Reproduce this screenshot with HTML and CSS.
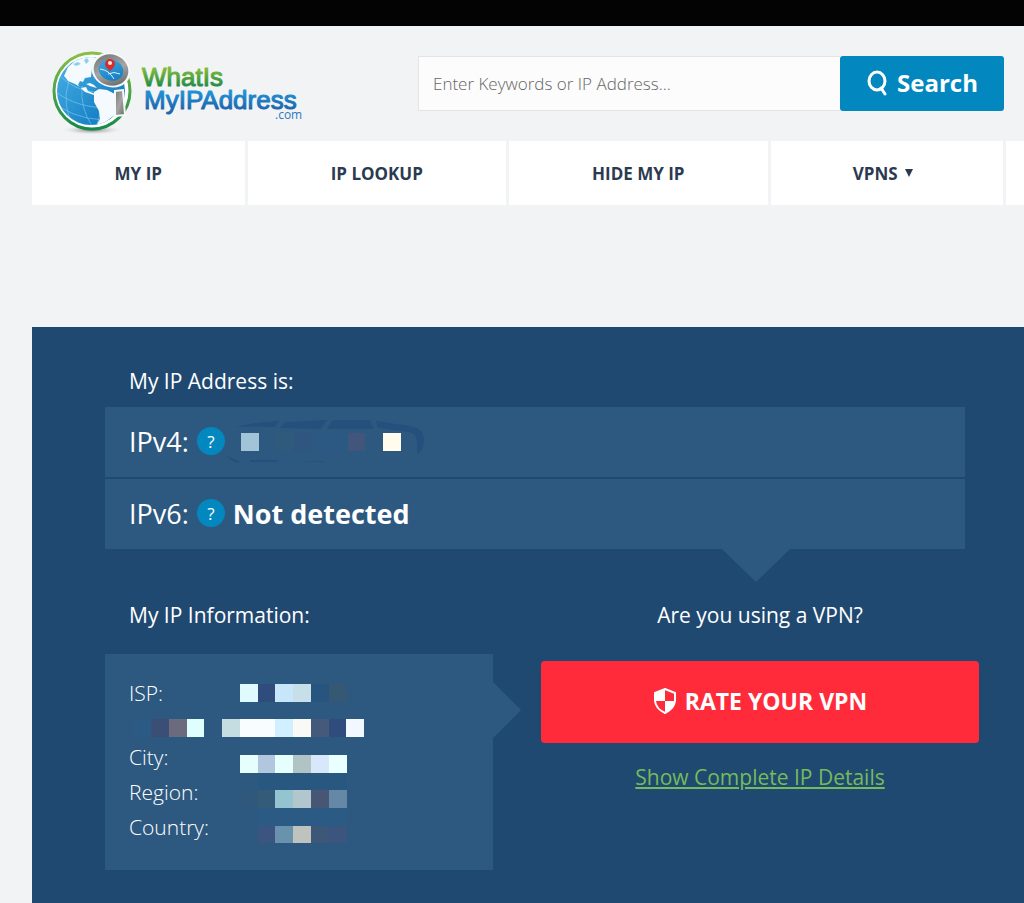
FILE: index.html
```html
<!DOCTYPE html>
<html lang="en">
<head>
    <meta charset="UTF-8">
    <meta name="viewport" content="width=device-width, initial-scale=1.0">
    <title>What Is My IP Address</title>
    <link rel="stylesheet" href="styles.css">
</head>
<body>
    <div class="top-bar"></div>

    <header class="header">
        <a class="logo" href="#" aria-label="WhatIsMyIPAddress.com">
            <svg width="256" height="88" viewBox="48 48 256 88">
                <defs>
                    <linearGradient id="ring" x1="0" y1="0" x2="0" y2="1">
                        <stop offset="0" stop-color="#8abf45"/>
                        <stop offset="1" stop-color="#158a48"/>
                    </linearGradient>
                    <linearGradient id="ocean" x1="0" y1="0" x2="1" y2="1">
                        <stop offset="0" stop-color="#49b2e6"/>
                        <stop offset="1" stop-color="#0871bc"/>
                    </linearGradient>
                    <linearGradient id="green" x1="0" y1="0" x2="0" y2="1">
                        <stop offset="0.2" stop-color="#83bd3c"/>
                        <stop offset="0.8" stop-color="#238c46"/>
                    </linearGradient>
                    <linearGradient id="blue" x1="0" y1="0" x2="0" y2="1">
                        <stop offset="0.1" stop-color="#209bdc"/>
                        <stop offset="0.8" stop-color="#1b66ae"/>
                    </linearGradient>
                    <linearGradient id="steel" x1="0" y1="0" x2="1" y2="1">
                        <stop offset="0" stop-color="#777"/>
                        <stop offset="0.5" stop-color="#a5a5a5"/>
                        <stop offset="1" stop-color="#666"/>
                    </linearGradient>
                    <radialGradient id="shadow">
                        <stop offset="0" stop-color="#777"/>
                        <stop offset="1" stop-color="#f1f3f5" stop-opacity="0"/>
                    </radialGradient>
                    <clipPath id="globe"><circle cx="91" cy="91" r="34"/></clipPath>
                </defs>
                <ellipse cx="92" cy="130" rx="32" ry="5" fill="url(#shadow)"/>
                <circle cx="92" cy="91" r="38" fill="#fff" stroke="url(#ring)" stroke-width="3"/>
                <circle cx="91" cy="91" r="34" fill="url(#ocean)"/>
                <g clip-path="url(#globe)">
                    <path d="M56 92q26 20 70 15M60 76q14 14 34 16M60 107q25 16 58 12M74 72q-14 20-4 48M82 86q-2 22 10 40M97 104q5 10 0 20" fill="none" stroke="#8bd0f2" stroke-width="0.7" opacity="0.8"/>
                    <path d="M64 76l4-9 7-6 9-4 9-2 3 4-4 8-1 10-6 1-2 4-3-1-2 4 3 3 5-1 2 4 7 3-1 1-9-3-5-5-5-3-7-3-3-4z" fill="#f4fafd"/>
                    <path d="M73 64l5-2 3 2-5 2zM84 60l3-2 2 3-3 3z" fill="#8fcdec"/>
                    <path d="M94 92l5-3 8 1 8 4 10 4-2 10-8 7-7 5-6 5-6 1 4-7-1-8-5-9z" fill="#f4fafd"/>
                    <path d="M86 84l4-1 4 2 3 3-4-1-3-1z" fill="#f4fafd"/>
                </g>
                <path d="M115 91l8-1 2 25-10 1z" fill="url(#steel)" stroke="#f7f8f9" stroke-width="2"/>
                <ellipse cx="111" cy="70" rx="20" ry="17" transform="rotate(20 111 70)" fill="#f7f8f9"/>
                <ellipse cx="111" cy="70" rx="15" ry="13" transform="rotate(20 111 70)" fill="url(#ocean)" stroke="url(#steel)" stroke-width="5"/>
                <path d="M100 69q9 1 14 10M108 74q6-3 12 0" fill="none" stroke="#d9f0fb" stroke-width="1"/>
                <path d="M110 71q-5-4-5-7a5 5 0 0 1 10 0q0 3-5 7z" fill="#d42e30"/>
                <circle cx="110" cy="63" r="2" fill="#ffe9dd"/>
                <text class="logo-name" x="142" y="86" fill="url(#green)" stroke="url(#green)">WhatIs</text>
                <text class="logo-name" x="144" y="109" fill="url(#blue)" stroke="url(#blue)">MyIPAddress</text>
                <text class="logo-domain" x="275" y="119">.com</text>
            </svg>
        </a>
        <form class="search">
            <input class="search-input" type="text" placeholder="Enter Keywords or IP Address..." aria-label="Enter Keywords or IP Address">
            <button class="search-btn" type="submit">
                <svg width="24" height="26" viewBox="0 0 24 26" fill="none" stroke="#fff" stroke-width="3">
                    <ellipse cx="11" cy="11" rx="8" ry="9"/>
                    <path d="M15 18l4 6" stroke-linecap="round"/>
                </svg>
                Search
            </button>
        </form>
    </header>

    <nav class="nav">
        <a href="#">MY IP</a>
        <a href="#">IP LOOKUP</a>
        <a href="#">HIDE MY IP</a>
        <a class="has-menu" href="#">VPNS <span class="caret"></span></a>
        <span class="nav-rest"></span>
    </nav>

    <main class="panel">
        <h2 class="title">My IP Address is:</h2>
        <div class="ip-box">
            <div class="ip-row">
                <span>IPv4:</span>
                <button class="help" type="button" aria-label="About IPv4">?</button>
                <svg class="ip-hidden" width="200" height="48" viewBox="226 419 200 48">
                    <path d="M235 429q20-5 43-6l-4 6q-20-1-39 0zM284 424l42-2-6 9-41-1zM332 422l37 0 4 9-47 0zM375 423l34 5q13 2 14 13 0 12-7 15v-10q1-10-8-12l-31-4z" fill="#254f7c"/>
                    <path d="M226 458l12 5-1 2q-8-2-11-7zM249 462l27 0 1 2-28 0zM297 463l26 0-1 1z" fill="#264f7b"/>
                    <rect x="275" y="435" width="18" height="18" fill="#305a7c"/>
                    <rect x="293" y="435" width="18" height="18" fill="#30567f"/>
                    <rect x="311" y="435" width="36" height="18" fill="#2b5984"/>
                    <rect x="347" y="435" width="17" height="18" fill="#41567a"/>
                    <rect x="240" y="435" width="18" height="18" fill="#a2c4d9"/>
                    <rect x="382" y="435" width="18" height="18" fill="#fffbed"/>
                </svg>
            </div>
            <div class="ip-row">
                <span>IPv6:</span>
                <button class="help" type="button" aria-label="About IPv6">?</button>
                <strong>Not detected</strong>
            </div>
        </div>

        <div class="details">
            <section>
                <h2 class="title">My IP Information:</h2>
                <div class="info-box">
                    <dl class="info">
                        <dt class="isp">ISP:</dt>
                        <dt>City:</dt>
                        <dt>Region:</dt>
                        <dt>Country:</dt>
                    </dl>
                    <svg class="mosaic" width="388" height="216" viewBox="105 654 388 216" shape-rendering="crispEdges">
                        <g fill="#2b5a84">
                            <rect x="134" y="719" width="17" height="18"/>
                            <rect x="258" y="773" width="89" height="17" fill="#285780"/>
                            <rect x="258" y="808" width="89" height="18"/>
                        </g>
                        <rect x="240" y="684" width="18" height="18" fill="#dffbff"/>
                        <rect x="258" y="684" width="17" height="18" fill="#304c7c"/>
                        <rect x="275" y="684" width="18" height="18" fill="#c8e6f9"/>
                        <rect x="293" y="684" width="18" height="18" fill="#c6dfe8"/>
                        <rect x="311" y="684" width="18" height="18" fill="#285580"/>
                        <rect x="329" y="684" width="18" height="18" fill="#355973"/>

                        <rect x="151" y="719" width="18" height="18" fill="#3b4e76"/>
                        <rect x="169" y="719" width="18" height="18" fill="#6b6a7e"/>
                        <rect x="187" y="719" width="17" height="18" fill="#dfffff"/>
                        <rect x="222" y="719" width="18" height="18" fill="#c5dce1"/>
                        <rect x="240" y="719" width="35" height="18" fill="#f8fdff"/>
                        <rect x="275" y="719" width="18" height="18" fill="#d0efff"/>
                        <rect x="293" y="719" width="18" height="18" fill="#f9faf6"/>
                        <rect x="311" y="719" width="18" height="18" fill="#45597a"/>
                        <rect x="329" y="719" width="17" height="18" fill="#304c7c"/>
                        <rect x="346" y="719" width="18" height="18" fill="#f2f8ff"/>

                        <rect x="240" y="755" width="18" height="18" fill="#e5ffff"/>
                        <rect x="258" y="755" width="17" height="18" fill="#b1c7de"/>
                        <rect x="275" y="755" width="18" height="18" fill="#e5ffff"/>
                        <rect x="293" y="755" width="18" height="18" fill="#b1c4c5"/>
                        <rect x="311" y="755" width="18" height="18" fill="#d9e7fb"/>
                        <rect x="329" y="755" width="18" height="18" fill="#eaffff"/>

                        <rect x="240" y="790" width="18" height="18" fill="#30577c"/>
                        <rect x="258" y="790" width="17" height="18" fill="#345b77"/>
                        <rect x="275" y="790" width="18" height="18" fill="#94c4cf"/>
                        <rect x="293" y="790" width="18" height="18" fill="#b2c6cd"/>
                        <rect x="311" y="790" width="18" height="18" fill="#475675"/>
                        <rect x="329" y="790" width="18" height="18" fill="#6488a5"/>

                        <rect x="258" y="826" width="17" height="17" fill="#3b5580"/>
                        <rect x="275" y="826" width="18" height="17" fill="#6992ad"/>
                        <rect x="293" y="826" width="18" height="17" fill="#bec4bd"/>
                        <rect x="311" y="826" width="18" height="17" fill="#3c5778"/>
                        <rect x="329" y="826" width="18" height="17" fill="#3b557e"/>
                    </svg>
                </div>
            </section>
            <section class="vpn">
                <h2 class="title">Are you using a VPN?</h2>
                <button class="rate-btn" type="button">
                    <svg width="24" height="26" viewBox="0 0 24 26">
                        <path d="M12 1l10 4v8q-1 8-10 12Q3 21 2 13V5z" fill="none" stroke="#fff" stroke-width="2"/>
                        <path d="M12 1v12H2V5zM12 13h10q-1 8-10 12z" fill="#fff"/>
                    </svg>
                    RATE YOUR VPN
                </button>
                <a class="more" href="#">Show Complete IP Details</a>
            </section>
        </div>
    </main>
</body>
</html>
```
FILE: styles.css
```css
* {
    margin: 0;
    padding: 0;
    box-sizing: border-box;
    font-family: 'Open Sans', 'Noto Sans', sans-serif;
}

body {
    min-height: 100vh;
    display: flex;
    flex-direction: column;
    background: #f1f3f5;
    color: #fff;
    overflow-x: hidden;
}

.top-bar {
    height: 26px;
    background: #030303;
}

.header {
    display: flex;
    gap: 114px;
    align-items: flex-start;
    padding: 22px 20px 5px 48px;
}

.logo svg {
    display: block;
}

.logo-name {
    font-family: 'Liberation Sans', Arial, sans-serif;
    font-size: 26px;
    stroke-width: 1px;
    stroke-linejoin: round;
}

.logo-domain {
    font-size: 12px;
    fill: #2b7bb9;
}

.search {
    flex: 1;
    display: flex;
    margin-top: 8px;
}

.search-input {
    flex: 1;
    min-width: 0;
    height: 55px;
    padding: 0 14px;
    background: #fcfcfc;
    border: 1px solid #e2e4e6;
    border-right: none;
    font-size: 17px;
    font-weight: 300;
}

.search-input::placeholder {
    color: #666;
}

.search-btn {
    display: flex;
    align-items: center;
    justify-content: center;
    gap: 7px;
    width: 164px;
    padding-bottom: 2px;
    background: #0387bf;
    border: none;
    border-radius: 3px;
    color: #fff;
    font-size: 24px;
    font-weight: 700;
    cursor: pointer;
}

.nav {
    display: grid;
    grid-template-columns: 213fr 259fr 259fr 233fr 18fr;
    gap: 3px;
    height: 64px;
    margin-left: 32px;
}

.nav a,
.nav-rest {
    display: flex;
    align-items: center;
    justify-content: center;
    gap: 7px;
    background: #fff;
    color: #2b3a50;
    font-size: 17px;
    font-weight: 700;
    text-decoration: none;
}

.nav .has-menu {
    padding-right: 8px;
}

.caret {
    border: 4px solid transparent;
    border-top: 8px solid #2b3a50;
    border-bottom: none;
}

.panel {
    flex: 1;
    margin: 122px 0 0 32px;
    padding: 38px 45px 33px 73px;
    background: #204972;
}

.title {
    padding-left: 24px;
    font-size: 21px;
    font-weight: 400;
    line-height: 32px;
}

.ip-box {
    position: relative;
    display: grid;
    gap: 2px;
    margin: 10px 14px 0 0;
}

.ip-row {
    display: flex;
    align-items: center;
    gap: 8px;
    height: 70px;
    padding: 0 24px 2px;
    background: #2d5980;
    font-size: 27px;
}

.ip-row strong {
    font-weight: 700;
}

.help {
    width: 28px;
    height: 28px;
    background: #0387bf;
    border: none;
    border-radius: 50%;
    color: #fff;
    font-size: 17px;
    cursor: pointer;
}

.ip-hidden {
    margin-left: -6px;
}

/* arrows pointing at the VPN column */
.ip-box::after {
    content: '';
    position: absolute;
    top: 100%;
    right: 175px;
    border: 34px solid transparent;
    border-top: 33px solid #2d5980;
    border-bottom: none;
}

.info-box::after {
    content: '';
    position: absolute;
    left: 100%;
    top: 28px;
    border: 28px solid transparent;
    border-left: 28px solid #2d5980;
    border-right: none;
}

.details {
    display: grid;
    grid-template-columns: 388fr 438fr;
    gap: 48px;
    margin-top: 50px;
}

.info-box {
    position: relative;
    margin-top: 23px;
    padding: 22px 24px 25px;
    background: #2d5980;
}

.info {
    font-size: 21px;
    font-weight: 300;
    line-height: 35px;
}

.isp {
    height: 64px;
}

.mosaic {
    position: absolute;
    top: 0;
    left: 0;
}

.vpn {
    display: flex;
    flex-direction: column;
    align-items: center;
}

.vpn .title {
    padding: 0;
}

.rate-btn {
    display: flex;
    align-items: center;
    justify-content: center;
    gap: 8px;
    width: 100%;
    height: 82px;
    margin: 30px 0 18px;
    padding-bottom: 2px;
    background: #ff2b3a;
    border: none;
    border-radius: 4px;
    color: #fff;
    font-size: 23px;
    font-weight: 700;
    cursor: pointer;
}

.more {
    color: #74bb5b;
    font-size: 21px;
    line-height: 32px;
}
```
